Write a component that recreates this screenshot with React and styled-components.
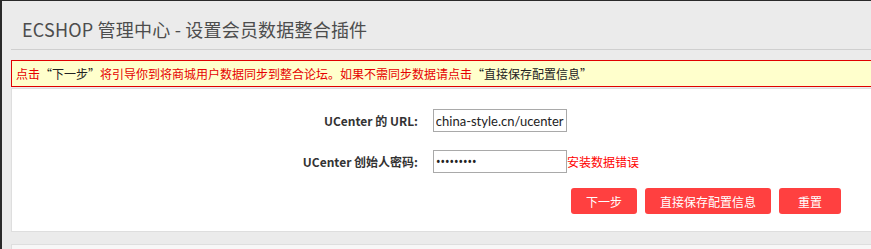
import React, { useRef, useLayoutEffect } from "react";
import styled, { createGlobalStyle } from "styled-components";

const GlobalStyle = createGlobalStyle`
  html, body {
    margin: 0;
    padding: 0;
    overflow: hidden;
  }
  body {
    background: #ebebeb;
    font-family: "Noto Sans CJK SC", "Noto Sans", sans-serif;
    font-size: 12px;
    color: #333;
  }
`;

export default function App() {
  const urlRef = useRef(null);

  useLayoutEffect(() => {
    // the url is longer than the box, show its tail like a focused field
    if (urlRef.current) urlRef.current.scrollLeft = 9999;
  }, []);

  return (
    <>
      <GlobalStyle />
      <Frame>
        <Header>
          <Title>ECSHOP 管理中心 - 设置会员数据整合插件</Title>
        </Header>

        <Notice>
          点击<Quote>“下一步”</Quote>将引导你到将商城用户数据同步到整合论坛。如果不需同步数据请点击<Quote>“直接保存配置信息”</Quote>
        </Notice>

        <Panel>
          <FormGrid>
            <Label>UCenter 的 URL:</Label>
            <Field>
              <TextInput
                ref={urlRef}
                type="text"
                defaultValue="http://www.china-style.cn/ucenter"
              />
            </Field>

            <Label>UCenter 创始人密码:</Label>
            <Field>
              <TextInput type="password" defaultValue="123456789" />
              <ErrorText>安装数据错误</ErrorText>
            </Field>

            <Buttons>
              <RedButton type="button">下一步</RedButton>
              <RedButton type="button">直接保存配置信息</RedButton>
              <RedButton type="button">重置</RedButton>
            </Buttons>
          </FormGrid>
        </Panel>

        <NextPanel />
      </Frame>
    </>
  );
}

const Frame = styled.div`
  box-sizing: border-box;
  width: calc(100% + 40px);
  height: 249px;
  overflow: hidden;
  border-left: 2px solid #2a2a2a;
  border-top: 1px solid #2a2a2a;
  padding-left: 9px;
`;

const Header = styled.div`
  height: 48px;
  border-bottom: 1px solid #cfcfcf;
`;

const Title = styled.h1`
  margin: 0;
  padding: 16px 0 0 11px;
  font-size: 18px;
  line-height: 24px;
  font-weight: normal;
  letter-spacing: 0.2px;
  color: #4d4d4d;
`;

const Notice = styled.div`
  margin-top: 10px;
  height: 25px;
  line-height: 25px;
  padding-left: 4px;
  background: #ffffcc;
  border: 1px solid #e00000;
  color: #e60000;
  white-space: nowrap;
`;

const Quote = styled.span`
  color: #222;
`;

const Panel = styled.div`
  margin-top: 1px;
  background: #fff;
  border: 1px solid #dedede;
  padding: 11px 0;
`;

const FormGrid = styled.div`
  display: grid;
  grid-template-columns: 406px auto;
  grid-template-rows: 41px 41px 38px;
  column-gap: 15px;
`;

const Label = styled.div`
  align-self: center;
  text-align: right;
  font-weight: bold;
  color: #333;
`;

const Field = styled.div`
  display: flex;
  align-items: center;
`;

const TextInput = styled.input`
  box-sizing: border-box;
  width: 134px;
  height: 23px;
  padding: 0 2px;
  border: 1px solid #a9a9a9;
  border-radius: 0;
  outline: none;
  font-family: Lato, "Noto Sans", sans-serif;
  font-size: 13px;
  color: #222;

  &[type="password"] {
    font-family: "Noto Sans", sans-serif;
    font-size: 12px;
  }
`;

const ErrorText = styled.span`
  color: #ff0000;
`;

const Buttons = styled.div`
  grid-column: 2;
  display: flex;
  align-items: center;
  gap: 8px;
  padding-left: 138px;
`;

const RedButton = styled.button`
  height: 26px;
  min-width: 62px;
  padding: 0 15px;
  border: none;
  border-radius: 3px;
  background: #ff4040;
  color: #fff;
  font-family: "Noto Sans CJK SC", sans-serif;
  font-size: 12px;
  cursor: pointer;
`;

const NextPanel = styled.div`
  margin-top: 12px;
  height: 20px;
  background: #f7f7f7;
  border: 1px solid #dedede;
`;
